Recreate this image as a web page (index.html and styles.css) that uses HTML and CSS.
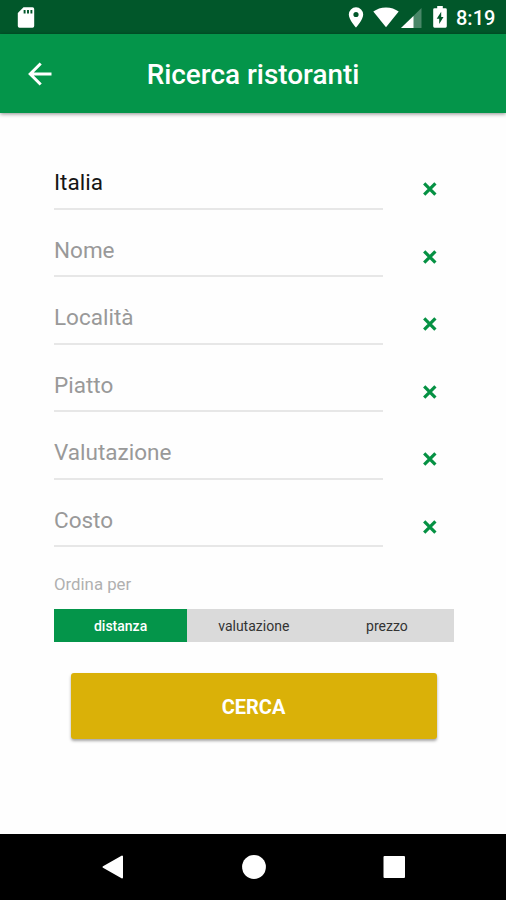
FILE: index.html
```html
<!DOCTYPE html>
<html lang="it">
<head>
<meta charset="utf-8">
<title>Ricerca ristoranti</title>
<link rel="stylesheet" href="styles.css">
</head>
<body>
<svg class="defs" width="0" height="0">
  <symbol id="clear" viewBox="0 0 16 16"><path d="M2.2 2.4 13.400 13.6M13.400 2.4 2.2 13.6" fill="none" stroke="currentColor" stroke-width="3.2"/></symbol>
</svg>
<div class="screen">
  <div class="statusbar">
    <svg class="sd" width="18" height="22" viewBox="0 0 18 22"><path d="M6.500 .3H15.500Q17.200 .3 17.200 2V19Q17.200 20.800 15.500 20.800H2.500Q.8 20.800 .8 19V6Z" fill="#fff"/><path d="M7.600 3V6.500M11 3V6.500M14.400 3V6.500" stroke="#01572a" stroke-width="1.900"/></svg>
    <div class="status-icons">
      <svg class="pin" width="16" height="21" viewBox="0 0 16 21"><path fill-rule="evenodd" d="M8 .3a7.200 7.200 0 0 0-7.200 7.200C.8 12.800 8 20.500 8 20.500s7.200-7.700 7.200-13A7.200 7.200 0 0 0 8 .3zm0 4.600a2.600 2.600 0 1 1 0 5.200 2.600 2.600 0 0 1 0-5.200z" fill="#fff"/></svg>
      <svg class="wifi" width="26" height="21" viewBox="0 0 26 21"><path d="M13 20.300.3 4.500C3.700 2 8 .4 13 .4S22.300 2 25.700 4.500Z" fill="#fff"/></svg>
      <svg class="signal" width="21" height="20" viewBox="0 0 21 20"><path d="M0 20 20.500 0V20Z" fill="#498768"/><path d="M0 20 12.500 8V20Z" fill="#fff"/></svg>
      <svg class="battery" width="14" height="22" viewBox="0 0 14 22"><path d="M4.200 0H9.800V2.200H12.500Q13.800 2.200 13.800 3.500V20.300Q13.800 21.700 12.500 21.700H1.500Q.2 21.700 .2 20.300V3.500Q.2 2.200 1.500 2.200H4.200Z" fill="#fff"/><path d="M8.200 5.800 3.700 12.700H6.200V18L10.500 10.900H8.200Z" fill="#01572a"/></svg>
      <span class="clock">8:19</span>
    </div>
  </div>
  <header class="appbar">
    <svg class="back" width="24" height="24" viewBox="0 0 24 24"><path d="M23.500 12H2.500M12.700 1.500 2.200 12 12.700 22.500" fill="none" stroke="#fff" stroke-width="3"/></svg>
    <h1>Ricerca ristoranti</h1>
  </header>
  <main class="form">
    <div class="row"><div class="field filled">Italia</div><svg class="clear"><use href="#clear"/></svg></div>
    <div class="row"><div class="field">Nome</div><svg class="clear"><use href="#clear"/></svg></div>
    <div class="row"><div class="field">Località</div><svg class="clear"><use href="#clear"/></svg></div>
    <div class="row"><div class="field">Piatto</div><svg class="clear"><use href="#clear"/></svg></div>
    <div class="row"><div class="field">Valutazione</div><svg class="clear"><use href="#clear"/></svg></div>
    <div class="row"><div class="field">Costo</div><svg class="clear"><use href="#clear"/></svg></div>
    <div class="sort-label">Ordina per</div>
    <div class="segments"><div class="segment active">distanza</div><div class="segment">valutazione</div><div class="segment">prezzo</div></div>
    <button class="search">CERCA</button>
  </main>
  <nav class="navbar">
    <svg width="24" height="26" viewBox="0 0 24 26"><path d="M21 2.500V23.500L2.500 13Z" fill="#fff" stroke="#fff" stroke-width="2" stroke-linejoin="round"/></svg>
    <svg width="24" height="26" viewBox="0 0 24 26"><circle cx="12" cy="13" r="11.900" fill="#fff"/></svg>
    <svg width="24" height="26" viewBox="0 0 24 26"><rect x="1.500" y="2" width="21.500" height="22" rx="1" fill="#fff"/></svg>
  </nav>
</div>
</body>
</html>
```

FILE: styles.css
```css
* { box-sizing: border-box; }
body { margin: 0; background: #fefefe; font-family: Roboto, "Liberation Sans", sans-serif; }
.defs { position: absolute; }
.screen { width: 506px; height: 900px; display: flex; flex-direction: column; overflow: hidden; }
.statusbar { height: 34px; flex: none; background: #01572a; display: flex; justify-content: space-between; align-items: flex-start; padding: 7px 11px 0 17px; }
.status-icons { display: flex; align-items: flex-start; }
.wifi { margin-left: 9px; }
.signal { margin-left: 2px; margin-top: 1px; }
.battery { margin-left: 11px; margin-top: -1px; }
.clock { margin-left: 9px; width: 39px; color: #fff; font-size: 20px; font-weight: 500; line-height: 22px; white-space: nowrap; }
.appbar { height: 79px; flex: none; background: #04954a; display: grid; grid-template-columns: 120px 1fr 120px; align-items: center; box-shadow: 0 1px 4px rgba(0, 0, 0, .45); }
.back { margin-left: 28px; }
h1 { margin: 3px 0 0; color: #fff; font-size: 27.9px; font-weight: 500; line-height: 32px; text-align: center; white-space: nowrap; }
.form { flex: 1; padding: 29.5px 52.500px 0 54px; }
.row { height: 67.5px; display: flex; align-items: flex-start; }
.field { width: 329px; height: 67px; padding-top: 26.500px; border-bottom: 2px solid #e7e7e7; color: #999; font-size: 22.5px; line-height: 27px; }
.filled { color: #151515; }
.clear { width: 16px; height: 16px; margin: 38.500px 0 0 38.500px; color: #059143; }
.sort-label { margin-top: 25px; color: #b0b0b0; font-size: 16.8px; line-height: 22px; }
.segments { display: flex; height: 33px; margin-top: 14px; background: #dadada; }
.segment { flex: 1; color: #333; font-size: 14px; line-height: 34px; text-align: center; }
.active { background: #04954a; color: #fff; font-weight: 500; }
.search { display: block; width: 366px; height: 66px; margin: 31px 0 0 16.500px; padding: 2px 0 0; border: 0; border-radius: 3px; background: #dab108; box-shadow: 0 2px 3px rgba(0, 0, 0, .35); color: #fff; font: 700 20px Roboto, sans-serif; }
.navbar { height: 66.5px; flex: none; background: #000; display: flex; justify-content: space-between; align-items: center; padding: 0 100px 0 101px; }
```
